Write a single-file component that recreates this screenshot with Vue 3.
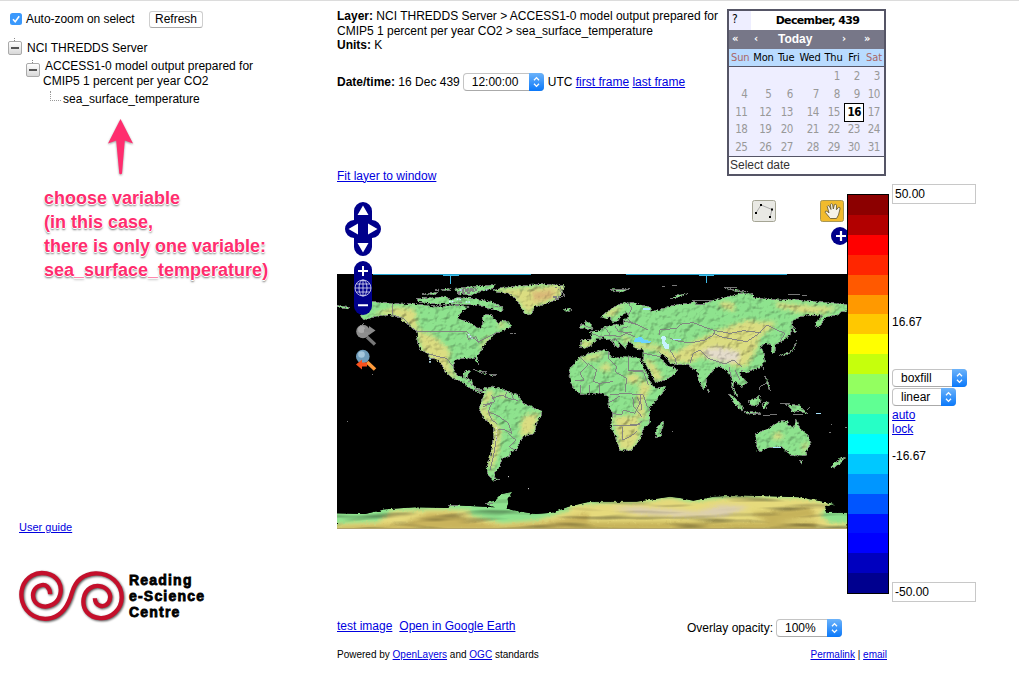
<script setup>
const weekdays = ['Sun', 'Mon', 'Tue', 'Wed', 'Thu', 'Fri', 'Sat']
const days = [...Array(4).fill(''), ...Array.from({ length: 31 }, (_, i) => i + 1)]
const palette = [
  '#8c0000', '#b20000', '#ff0000', '#ff2600', '#ff5900', '#ff9900', '#ffc800', '#ffff00', '#c6ff0c', '#93ff60',
  '#60ff93', '#26ffc6', '#00ffff', '#00c8ff', '#0096ff', '#0055ff', '#0012ff', '#0000ff', '#0000bf', '#00008f'
]

// Sheets of the world map: each has its own origin, three units to a map pixel.
const NW = 'translate(-2 -84) scale(.33333)'
const NE = 'translate(223 -4) scale(.33333)'
const SW = 'translate(-2 96) scale(.33333)'
const SE = 'translate(233 126) scale(.33333)'

const land = [
  { t: NW, d: 'M75 378L110 335 172 340 245 342 310 350 360 345 402 350 375 372 368 385 400 395 425 412 441 415 445 375 470 375 490 400 510 390 532 410 500 425 480 430 470 445 455 455 440 480 428 497 430 524 420 506 390 505 360 510 355 532 365 555 383 560 390 542 405 543 395 565 412 570 415 592 442 606 452 600 435 610 405 595 378 574 352 565 330 545 318 520 300 505 286 505 275 490 255 480 245 450 245 425 215 400 190 382 160 375 120 380 88 390Z' },
  { t: NW, d: 'M245 325L330 320 350 330 365 322 420 325 470 335 505 352 500 366 470 358 430 346 385 344 300 342 250 336Z' },
  { t: NW, d: 'M260 312L310 306 300 315ZM360 296L400 290 480 284 475 294 440 302 410 316 370 313ZM300 300L350 295 345 302ZM5 345L45 352 38 358 5 350ZM686 358L702 354 712 360 696 366Z' },
  { t: NW, d: 'M475 300L500 293 560 287 620 281 688 286 680 310 672 325 640 340 600 350 590 373 568 372 555 345 540 325 520 310 490 308Z' },
  { t: NW, d: 'M415 538L455 550 446 552ZM462 553L482 556 470 559Z' },
  { t: NE, d: 'M62 210L95 210 90 186 120 180 135 170 160 165 192 163 190 152 206 140 200 126 182 140 172 156 155 155 150 140 134 146 122 138 150 120 175 103 205 97 225 98 243 104 275 112 272 124 300 118 330 108 350 103 392 101 398 92 420 105 460 90 500 80 545 70 578 70 580 82 640 88 720 90 780 95 862 103 862 122 845 125 830 136 800 140 790 152 780 171 767 172 768 155 790 137 750 135 720 140 695 155 700 170 690 195 665 215 645 225 646 248 636 250 632 225 615 222 600 230 612 250 615 275 600 295 575 300 560 310 545 300 540 315 562 338 545 352 525 335 519 345 534 380 526 376 514 350 515 320 505 310 495 298 475 290 460 300 440 325 438 352 430 358 415 330 412 305 395 295 385 285 350 285 330 280 320 265 298 248 305 265 320 287 340 290 354 300 335 320 310 332 285 338 270 305 250 275 250 240 225 235 218 222 205 215 198 236 185 225 163 203 180 225 174 235 152 210 130 205 110 210 95 225 75 236 60 233Z' },
  { t: NE, d: 'M60 260L85 250 130 240 145 240 150 258 180 265 195 258 240 265 247 282 262 310 275 345 290 355 318 347 315 360 290 390 270 415 270 460 250 475 245 500 232 520 215 540 180 543 170 510 152 470 158 430 145 410 145 380 120 370 65 375 40 355 28 330 30 295 50 270Z' },
  { t: NE, d: 'M310 453L302 500 286 502 290 472ZM585 490L592 542 604 544 630 532 665 530 690 555 735 558 752 520 745 495 720 475 708 445 702 472 680 463 686 453 665 450 640 465 625 475 600 485ZM718 570L730 572 724 581ZM814 590L838 568 856 560 842 578 822 594Z' },
  { t: NE, d: 'M506 372L520 378 552 414 546 422 520 398ZM552 424L605 428 600 434 555 430ZM565 392L585 386 600 374 602 396 590 410 568 404ZM608 398L626 394 618 416 608 414ZM676 403L720 406 744 432 720 424 698 426 690 412ZM656 256L680 248 696 240 712 208 700 244 676 256ZM700 168L712 182 702 190ZM614 318L622 328 632 365 624 350ZM60 166L72 164 76 152 92 160 98 178 82 178 60 174ZM150 58L210 56 190 66 160 64ZM330 88L350 75 385 70 355 82ZM492 53L540 62 565 64 530 66ZM155 208L164 210 163 230ZM442 356L450 364 446 370Z' },
  { t: SW, d: 'M400 33L420 50 448 64 445 56 470 48 510 60 550 75 565 100 600 115 622 122 618 140 605 155 600 190 565 200 550 225 545 240 525 245 525 258 500 265 495 290 480 305 480 325 495 328 475 332 457 312 455 290 465 260 475 200 475 170 445 145 432 115 440 90 448 70 420 58Z' },
  { t: SW, d: 'M0 430L90 432 150 418 240 412 340 414 345 405 450 410 480 412 452 404 455 396 480 392 500 372 532 365 518 386 520 400 515 414 530 420 600 432 650 428 700 410 760 396 760 480 0 480Z' },
  { t: SE, d: 'M40 312L60 305 200 305 300 290 330 294 370 302 430 290 500 286 690 292 760 305 795 312 765 322 772 338 850 338 850 391 40 391Z' }
]

const heights = [
  { t: NW, d: 'M180 350L240 358 250 420 300 440 345 480 340 520 370 575 330 545 260 480 245 425 180 375 110 375Z' },
  { t: NW, d: 'M475 300L688 284 670 325 600 350 580 375 540 325Z' },
  { t: NW, d: 'M440 460L460 440 466 448 436 480ZM495 390L515 410 490 415Z' },
  { t: NE, d: 'M400 215L480 180 560 150 600 155 650 155 630 180 600 200 590 240 560 290 520 290 500 275 420 260 390 280 330 275 290 240 220 235 225 218 300 228 340 250Z' },
  { t: NE, d: 'M480 97L520 97 525 125 480 110ZM645 97L760 108 840 112 790 130 720 128 650 110ZM128 138L150 120 195 102 160 138Z' },
  { t: NE, d: 'M250 260L280 280 310 325 285 335ZM120 285L150 280 150 305 120 300ZM205 310L240 315 230 345 200 335ZM245 325L275 350 260 375 250 400 260 450 230 440 230 390ZM160 440L235 435 240 500 215 540 180 540ZM65 262L135 246 115 266 60 273Z' },
  { t: NE, d: 'M635 495L660 485 670 505 645 510ZM725 525L745 515 732 550ZM62 214L105 214 90 233 62 230ZM185 198L212 202 195 220Z' },
  { t: SW, d: 'M445 85L465 55 475 75 450 110 475 150 500 180 492 240 470 305 460 280 475 180 435 130ZM570 135L612 128 598 185 558 205 555 165ZM485 68L520 76 500 84Z' }
]

// The ice sheet rolls in long, flat folds, so its relief is drawn apart from the rest.
const ice = [
  { t: SW, d: 'M0 462L130 455 170 422 300 418 410 420 400 434 500 460 600 452 760 405 760 480 0 480Z' },
  { t: SE, d: 'M0 318L100 308 240 302 300 292 360 305 500 288 700 294 785 312 750 345 780 368 850 372 850 391 0 391Z' }
]

const borders = [
  { t: NW, d: 'M172 342V375L205 385 232 415 250 425H395L410 440 430 455 460 440 490 425M275 490L310 500 335 505 355 530M385 560L395 570M395 432L400 448 422 440 432 458' },
  { t: NE, d: 'M60 262L85 285 60 310 72 330 45 333M85 280L110 300 100 335 118 340 160 335M145 245V265L170 290 165 305 200 325 195 365M205 262V302H250M205 302L250 305 265 345M150 375L195 370 250 375 262 410M145 400L180 378 M155 430L185 435 190 420 225 430 240 400 230 380M160 468H225L245 455M188 470V510L210 500 230 485M210 465L240 465M120 340V370M90 345V375M62 345V370M218 380L222 410 245 440 M240 375L245 420' },
  { t: NE, d: 'M300 195L300 180 350 175 365 162 400 158 430 170 465 182 460 195 435 210 395 218 360 215 330 205M465 182L510 190 550 182 600 188 560 215 520 208 480 200 460 190M600 188L620 165 650 180 675 190 660 215M390 280L400 250 420 240 445 265 495 282 520 270 545 290M350 285L345 265 330 240M250 250L300 260M200 140L210 155 235 165 265 180M95 190L120 200 150 195 180 200 200 190 225 200M135 172L150 195M165 168L175 185 215 188M185 175L205 170M205 98L215 115 205 135M525 300L540 330M508 290L512 320M190 152L235 165M385 282L400 300' },
  { t: SW, d: 'M470 85L500 75 520 85 550 92M445 110L470 100 460 125 490 138 520 160 530 190 510 180 490 180M520 190L542 210 522 230 540 240M460 125L470 150 485 160M485 200L475 260 465 300M470 75L480 95 445 105M515 65L510 85M530 70L535 88' }
]
</script>

<template>
  <div class="page">
    <aside class="side">
      <div class="options">
        <svg class="check" viewBox="0 0 12 12"><rect width="12" height="12" rx="2.5" fill="#3b99fc" /><path d="M3 6.3L5.2 8.7 9.2 3.2" fill="none" stroke="#fff" stroke-width="1.6" /></svg>
        <span class="auto">Auto-zoom on select</span>
        <span class="refresh">Refresh</span>
      </div>
      <div class="node root"><i class="toggle"></i><span>NCI THREDDS Server</span></div>
      <div class="node child"><i class="toggle"></i><span><b class="gap"></b>ACCESS1-0 model output prepared for<br>CMIP5 1 percent per year CO2</span></div>
      <div class="node leaf"><i class="elbow"></i><span>sea_surface_temperature</span></div>
      <svg class="arrow" viewBox="0 0 30 60"><path d="M14.5 2L27 26.5 18.8 23.5 16 56.5Q14.6 58 13.3 56.5L10.2 23.5 2 26.5Z" fill="#ff2d6e" /></svg>
      <p class="note">choose variable<br>(in this case,<br>there is only one variable:<br>sea_surface_temperature)</p>
      <a class="guide">User guide</a>
      <div class="brand">
        <svg class="spirals" viewBox="56 180 326 166">
          <path d="M150 253C149 232 137 222 122 226C101 231 94 252 101 270C109 290 137 296 158 284C181 271 189 238 175 214C159 189 121 182 95 197C66 214 58 246 66 276C77 314 117 335 154 325C190 315 207 281 216 248C226 213 247 192 287 190C330 189 366 219 366 262C366 298 335 327 301 325C267 323 246 300 251 266C256 236 282 223 306 230C331 239 338 263 324 281C309 297 285 286 285 265" fill="none" stroke="#c40f2b" stroke-width="13" />
        </svg>
        <div>Reading<br>e-Science<br>Centre</div>
      </div>
    </aside>

    <main class="main">
      <header class="top">
        <section class="info">
          <p class="layer"><b>Layer:</b> NCI THREDDS Server &gt; ACCESS1-0 model output prepared for<br>CMIP5 1 percent per year CO2 &gt; sea_surface_temperature<br><b>Units:</b> K</p>
          <p class="time"><b>Date/time:</b>&nbsp;<span>16 Dec 439</span>
            <span class="select hour"><span>12:00:00</span><i><svg viewBox="0 0 15 18"><path d="M5 7.3L7.5 4.6 10 7.3M5 10.7L7.5 13.4 10 10.7" /></svg></i></span>
            <span>UTC</span>&nbsp;<a>first frame</a>&nbsp;<a>last frame</a></p>
          <a class="fit">Fit layer to window</a>
        </section>
        <section class="calendar">
          <div class="title"><span class="help">?</span><b>December, 439</b></div>
          <div class="nav"><span>«</span><span>‹</span><span class="today">Today</span><span>›</span><span>»</span></div>
          <div class="week names"><span v-for="(w, i) in weekdays" :key="w" :class="{ red: i % 6 === 0 }">{{ w }}</span></div>
          <div class="week dates"><span v-for="(d, i) in days" :key="i" :class="{ chosen: d === 16 }">{{ d }}</span></div>
          <div class="status">Select date</div>
        </section>
      </header>

      <div class="body">
        <div class="map">
          <svg class="world" viewBox="0 0 510 255">
            <defs>
              <clipPath id="land"><path v-for="(s, i) in land" :key="i" :d="s.d" :transform="s.t" /></clipPath>
              <clipPath id="north"><rect width="510" height="212" /></clipPath>
              <clipPath id="south"><rect y="212" width="510" height="43" /></clipPath>
              <filter id="soft" x="-20%" y="-20%" width="140%" height="140%"><feGaussianBlur stdDeviation="7" /></filter>
              <filter id="relief" filterUnits="userSpaceOnUse" x="0" y="0" width="510" height="255" color-interpolation-filters="sRGB">
                <feTurbulence type="fractalNoise" baseFrequency=".28" numOctaves="2" seed="8" result="edge" />
                <feDisplacementMap in="SourceGraphic" in2="edge" scale="4" xChannelSelector="R" yChannelSelector="G" result="shape" />
                <feTurbulence type="fractalNoise" baseFrequency=".13 .15" numOctaves="3" seed="3" result="noise" />
                <feDiffuseLighting in="noise" surfaceScale="1.2" diffuseConstant="1.22" lighting-color="#fff" result="light"><feDistantLight azimuth="225" elevation="55" /></feDiffuseLighting>
                <feComposite in="shape" in2="light" operator="arithmetic" k1="1" result="lit" />
                <feComposite in="lit" in2="shape" operator="in" />
              </filter>
              <filter id="folds" filterUnits="userSpaceOnUse" x="0" y="0" width="510" height="255" color-interpolation-filters="sRGB">
                <feTurbulence type="fractalNoise" baseFrequency=".25" numOctaves="2" seed="8" result="edge" />
                <feDisplacementMap in="SourceGraphic" in2="edge" scale="3" xChannelSelector="R" yChannelSelector="G" result="shape" />
                <feTurbulence type="fractalNoise" baseFrequency=".015 .09" numOctaves="2" seed="5" result="noise" />
                <feDiffuseLighting in="noise" surfaceScale="2.4" diffuseConstant="1.2" lighting-color="#fff" result="light"><feDistantLight azimuth="250" elevation="55" /></feDiffuseLighting>
                <feComposite in="shape" in2="light" operator="arithmetic" k1="1" result="lit" />
                <feComposite in="lit" in2="shape" operator="in" />
              </filter>
            </defs>
            <rect width="510" height="255" fill="#000" />
            <path d="M36 .5H194M289 .5H450" stroke="#25a4d0" stroke-width="1" />
            <path d="M106 1.5H122M113.5 1V10M362 1.5H377M369.5 1V9" stroke="#40bce8" stroke-width="1" />
            <g clip-path="url(#north)">
              <g filter="url(#relief)">
                <g clip-path="url(#land)">
                  <rect width="510" height="255" fill="#8ee38e" />
                  <path v-for="(s, i) in heights" :key="i" :d="s.d" :transform="s.t" fill="#e2dc80" fill-opacity=".92" filter="url(#soft)" />
                  <path :transform="NE" d="M425 240L470 230 540 245 535 275 490 278 440 262Z" fill="#e4dccb" filter="url(#soft)" />
                  <path :transform="NW" d="M590 305L660 300 650 325 600 335Z" fill="#d9b877" filter="url(#soft)" />
                </g>
              </g>
            </g>
            <g clip-path="url(#south)">
              <g filter="url(#folds)">
                <g clip-path="url(#land)">
                  <rect width="510" height="255" fill="#8ee38e" />
                  <path v-for="(s, i) in ice" :key="i" :d="s.d" :transform="s.t" fill="#e6da7c" filter="url(#soft)" />
                  <path :transform="SE" d="M120 322L200 342 330 350 460 350 540 320 450 315 380 335 200 320Z" fill="#dccfb0" filter="url(#soft)" />
                  <path :transform="SW" d="M0 470L200 462 280 430 360 430 400 450 500 468 640 456 760 430 760 480 0 480Z" fill="#c9b35c" filter="url(#soft)" />
                  <path :transform="SE" d="M0 366H740V391H0ZM540 340L720 320 740 350 600 368Z" fill="#c6b25a" filter="url(#soft)" />
                </g>
              </g>
            </g>
            <g fill="none" stroke="#808080" stroke-width="2.8" shape-rendering="crispEdges">
              <path v-for="(s, i) in borders" :key="i" :d="s.d" :transform="s.t" />
              <path v-for="(s, i) in land.slice(0, 10)" :key="'c' + i" :d="s.d" :transform="s.t" stroke-dasharray="6 3 3 7 12 5" />
              <path :transform="NW" d="M370 305H420M385 297H430M290 346H325M350 338H380M660 290L690 315 650 335M250 325H280M480 350H505M735 405H745M740 455V475M525 430H545M110 553H114M88 400L75 408" stroke-dasharray="9 3 5 4" />
              <path :transform="NW" d="M375 301H425M365 310H410M655 322H675M660 328H672" stroke-width="6" stroke-dasharray="11 4" />
              <path :transform="NE" d="M395 92H460M405 105H435M150 60H205M305 50H315M335 48H350M495 53H530M685 73H720M725 76H740M0 50L15 80M560 432H600M610 438L650 432M660 400H690M700 435L730 432M740 420L750 412M600 360V350L620 340M612 290V300M335 484H339M808 487H812M812 465H816M855 472H860M64 160L80 170 95 175" />
              <path :transform="SW" d="M340 408H370M450 400H475M37 155H40M435 5H455M465 15H485M418 60L440 60" />
            </g>
            <g :transform="NE" shape-rendering="crispEdges">
              <path d="M222 217L225 205 245 200 250 208 275 215 265 220 240 217Z" fill="#6cd3ff" />
              <path d="M303 200L315 197 320 207 312 213 328 225 328 238 315 236 307 220Z" fill="#c6f3ff" />
              <path d="M248 114H270V120H248ZM340 207H362V211H340ZM640 530H664V533H640ZM768 429H782V432H768Z" fill="#a8e4ff" />
            </g>
            <path :transform="NW" d="M342 335H356M365 328H380M392 336H408M400 432L412 446M285 505V520M375 300H382M452 300H458" stroke="#c9f4ff" stroke-width="5" stroke-dasharray="5 3" />
            <path :transform="SW" d="M519 320H522M579 356H582M484 172V215" stroke="#eee" stroke-width="3" stroke-dasharray="4 5" />
            <path d="M0 254.5H510" stroke="#b3a46c" />
          </svg>

          <svg class="pan" viewBox="0 0 36 54">
            <path d="M9 9a9 9 0 0 1 18 0V18a9 9 0 0 1 0 18V45a9 9 0 0 1-18 0V36a9 9 0 0 1 0-18Z" fill="#00008b" />
            <path d="M18 3.5L23.5 13H12.5ZM18 50.5L23.5 41H12.5ZM3.5 27L13 21.5V32.5ZM32.5 27L23 21.5V32.5Z" fill="#fff" />
          </svg>
          <svg class="zoom" viewBox="0 0 18 54">
            <rect width="18" height="54" rx="9" fill="#00008b" />
            <path d="M4 10H14M9 5V15M4 44.2H14" stroke="#fff" stroke-width="2" />
            <g fill="none" stroke="#dfdff5" stroke-width=".8"><circle cx="9" cy="27" r="8" /><ellipse cx="9" cy="27" rx="4" ry="8" /><path d="M9 19V35M1 27H17M2.3 23H15.7M2.3 31H15.7" /></g>
          </svg>
          <svg class="lens next" viewBox="0 0 22 22"><path d="M12 13L20 20.5" stroke="#777" stroke-width="3.4" /><circle cx="8" cy="7.5" r="6.8" fill="#8e8e8e" /><circle cx="6.5" cy="5.5" r="3.5" fill="#aaa" /><path d="M9 5H14V2L20.5 6.5 14 11V8H9Z" fill="#8a8a8a" /></svg>
          <svg class="lens prev" viewBox="0 0 22 22"><path d="M12 13L20 20.5" stroke="#ff9b3c" stroke-width="3.6" /><circle cx="7.8" cy="7.5" r="6.8" fill="#6f9cba" /><circle cx="6.5" cy="5.5" r="3.3" fill="#a5c7dc" /><path d="M1 15.5L7 10.5V13.5H12V17.5H7V20.5Z" fill="#f9511d" /></svg>
          <svg class="tool line" viewBox="0 0 24 22"><rect x=".5" y=".5" width="23" height="21" rx="2" fill="#e9e9e4" stroke="#a5a595" /><path d="M4 13L9 5 20 9.5 18 17" fill="none" stroke="#999" stroke-width=".8" /><path d="M3 12h2v2H3ZM8 4h2v2H8ZM19 8.5h2v2h-2ZM17 16h2v2h-2Z" /></svg>
          <svg class="tool hand" viewBox="0 0 24 22"><rect x=".5" y=".5" width="23" height="21" rx="2" fill="#f1bb2d" stroke="#a89755" /><path d="M9.5 17.5L5.2 12.3Q5 10.5 6.8 11.2L9 12.8 7.2 6.5Q8 4.7 9.3 6.2L11 9.5 10.4 4.5Q11.5 2.8 12.6 4.4L13.3 9 14.4 4.6Q16 3.5 16.5 5.2L16.4 9.8 18.6 7.2Q20.3 7 20 8.8L18.5 15 16.5 18.5H10.3Z" fill="#f5f2e7" stroke="#5c512d" stroke-width=".8" /></svg>
          <svg class="plus" viewBox="0 0 18 18"><circle cx="9" cy="9" r="9" fill="#00008b" /><path d="M5 9H15M10 4V14" stroke="#fff" stroke-width="2.2" /></svg>
        </div>
        <div class="bar"><i v-for="c in palette" :key="c" :style="{ background: c }"></i></div>
        <div class="scale">
          <span class="field">50.00</span>
          <span class="upper">16.67</span>
          <span class="select box"><span>boxfill</span><i><svg viewBox="0 0 15 18"><path d="M5 7.3L7.5 4.6 10 7.3M5 10.7L7.5 13.4 10 10.7" /></svg></i></span>
          <span class="select linear"><span>linear</span><i><svg viewBox="0 0 15 18"><path d="M5 7.3L7.5 4.6 10 7.3M5 10.7L7.5 13.4 10 10.7" /></svg></i></span>
          <a>auto</a><a>lock</a>
          <span class="lower">-16.67</span>
          <span class="field last">-50.00</span>
        </div>
      </div>
      <div class="actions">
        <span class="first"><a>test image</a><a>Open in Google Earth</a></span>
        <span class="opacity">Overlay opacity: <span class="select percent"><span>100%</span><i><svg viewBox="0 0 15 18"><path d="M5 7.3L7.5 4.6 10 7.3M5 10.7L7.5 13.4 10 10.7" /></svg></i></span></span>
      </div>
      <footer class="foot"><span>Powered by <a>OpenLayers</a> and <a>OGC</a> standards</span><span><a>Permalink</a> | <a>email</a></span></footer>
    </main>
  </div>
</template>

<style>
body { background: #fff; overflow: hidden; }
</style>

<style scoped>
.page { display: flex; box-sizing: border-box; width: 1019px; height: 690px; border-top: 1px solid #dcdcdc; font: 12px/15px "Liberation Sans", Arial, sans-serif; color: #000; overflow: hidden; }
.page * { box-sizing: border-box; }
svg { display: block; }
p { margin: 0; }
a { color: #0000e0; text-decoration: underline; }
.side { width: 337px; flex: none; display: flex; flex-direction: column; align-items: flex-start; white-space: nowrap; }
.options { display: flex; align-items: center; height: 18px; margin: 9px 0 0 10px; }
.check { width: 12px; height: 12px; }
.auto { margin-left: 4px; width: 123px; letter-spacing: -.04px; }
.refresh { width: 54px; height: 17px; border: 1px solid #cfcfcf; border-bottom-color: #aaa; border-radius: 3px; text-align: center; line-height: 15px; }
.node { display: flex; align-items: flex-start; }
.root { margin: 13px 0 0 8px; }
.root span { margin-left: 5px; }
.toggle { position: relative; width: 14px; height: 14px; border: 1px solid #aaa; border-radius: 2px; background: linear-gradient(#fff, #d8d8d8); }
.toggle::before { content: ""; position: absolute; left: 2px; top: 5px; width: 8px; height: 2px; background: #555; }
.toggle::after { content: ""; position: absolute; left: 5px; top: -4px; height: 3px; border-left: 1px dotted #888; }
.child { margin: 3px 0 0 26px; }
.child .toggle { margin-top: 4px; }
.child span { margin-left: 3px; }
.gap { display: inline-block; width: 2px; }
.leaf { margin: 3px 0 0 50px; }
.elbow { width: 11px; height: 10px; border: dotted #999; border-width: 0 0 1px 1px; margin-top: -1px; }
.leaf span { margin-left: 2px; }
.arrow { width: 30px; height: 60px; margin: 10px 0 0 106px; filter: drop-shadow(0 1px 1px #999); }
.note { margin: 9px 0 0 44px; font-weight: bold; font-size: 18px; line-height: 24px; color: #ff2d6e; text-shadow: -1px 0 #fff, 1px 0 #fff, 0 -1px #fff, 0 1px #fff, 0 2px 2px #777; }
.guide { font-size: 11px; margin: 238px 0 0 19px; }
.brand { display: flex; margin: 35px 0 0 19px; }
.spirals { width: 108px; height: 55px; filter: drop-shadow(1px 1px 1px #555); }
.brand div { margin: 2px 0 0 2px; font: bold 14px/16px "Liberation Sans", Arial, sans-serif; letter-spacing: 1.2px; -webkit-text-stroke: .8px #000; }
.main { width: 682px; flex: none; display: flex; flex-direction: column; }
.top { display: flex; height: 183px; }
.info { width: 390px; padding-top: 8px; white-space: nowrap; display: flex; flex-direction: column; align-items: flex-start; }
.layer { line-height: 14.5px; }
.time { display: flex; align-items: center; height: 18px; margin-top: 20px; padding-top: 1px; }
.select { display: inline-flex; height: 18px; border: 1px solid #c4c4c4; border-bottom-color: #aaa; border-radius: 4px; background: #fff; line-height: 16px; }
.select > span { flex: 1; padding-left: 8px; }
.select i { width: 15px; height: 18px; margin: -1px -1px -1px 0; border-radius: 0 4px 4px 0; background: linear-gradient(#6cb3fa, #0a78fa); }
.select svg { width: 15px; height: 18px; fill: none; stroke: #fff; stroke-width: 1.3; }
.hour { width: 81px; margin: 0 4px 0 3px; }
.fit { margin-top: 78px; }
.calendar { width: 159px; height: 167px; margin-top: 8px; border: 2px solid #556; background: #eef; font: 12px/18px "DejaVu Sans Condensed", "DejaVu Sans", sans-serif; }
.title { display: flex; height: 19px; background: #fff; text-align: center; line-height: 20px; }
.title b { flex: 1; font: bold 11px/20px "DejaVu Sans", sans-serif; letter-spacing: -.65px; }
.help { width: 22px; background: #eef; text-align: left; padding-left: 3px; line-height: 17px; font-size: 12px; }
.nav { display: grid; grid-template-columns: 22px 22px 66px 22px 23px; height: 19px; background: #778; color: #fff; font: bold 11px/18px "DejaVu Sans Condensed", sans-serif; }
.nav span { padding-left: 3px; }
.nav .today { font: bold 12px/18px "Liberation Sans", Arial, sans-serif; padding-left: 5px; }
.week { display: grid; grid-template-columns: 22.5px 24px 21.5px 26px 21px 20px 20px; }
.names { height: 18px; background: #b9dbff; border-bottom: 1px solid #556; text-align: center; font-size: 11px; letter-spacing: -.15px; }
.red { color: #a66; }
.dates { height: 89px; grid-auto-rows: 17.8px; color: #999; text-align: right; font-size: 11.5px; letter-spacing: -.4px; line-height: 19px; }
.dates span { padding-right: 4px; }
.dates .chosen { background: #fff; border: 1px solid #000; color: #000; font-weight: bold; padding-right: 2px; line-height: 17px; height: 19px; }
.status { height: 18px; border-top: 1px solid #556; background: #fff; padding-left: 1px; color: #333; font: 12px/17px "Liberation Sans", Arial, sans-serif; }
.body { display: flex; height: 418px; }
.map { position: relative; width: 510px; height: 418px; flex: none; overflow: hidden; }
.world { width: 510px; height: 255px; margin-top: 90px; }
.pan { position: absolute; left: 8px; top: 18px; width: 36px; height: 54px; }
.zoom { position: absolute; left: 17px; top: 77px; width: 18px; height: 54px; }
.lens { position: absolute; left: 18px; width: 22px; height: 22px; }
.next { top: 140px; }
.prev { top: 165px; }
.tool { position: absolute; top: 16px; width: 24px; height: 22px; }
.line { left: 415px; }
.hand { left: 483px; }
.plus { position: absolute; left: 494px; top: 43px; width: 18px; height: 18px; }
.bar { width: 42px; height: 400px; margin-top: 10px; border: 1px solid #000; display: flex; flex-direction: column; flex: none; }
.bar i { flex: 1; }
.scale { margin-left: 3px; display: flex; flex-direction: column; align-items: flex-start; line-height: 14px; }
.field { width: 84px; height: 20px; border: 1px solid #c8c8c8; padding: 2px 0 0 2px; }
.upper { margin-top: 111px; }
.box { width: 75px; margin-top: 40px; }
.linear { width: 64px; margin: 1px 0 2px; }
.lower { margin-top: 13px; }
.last { margin-top: 119px; }
.actions { display: flex; justify-content: space-between; width: 505px; height: 26px; margin-top: 15px; white-space: nowrap; }
.first { display: flex; gap: 7px; padding-top: 2px; }
.opacity { display: flex; gap: 3px; align-items: flex-start; line-height: 19px; margin-top: 2px; }
.percent { width: 66px; line-height: 17px; }
.foot { display: flex; justify-content: space-between; width: 550px; font-size: 10px; margin-top: 4px; white-space: nowrap; }
</style>
